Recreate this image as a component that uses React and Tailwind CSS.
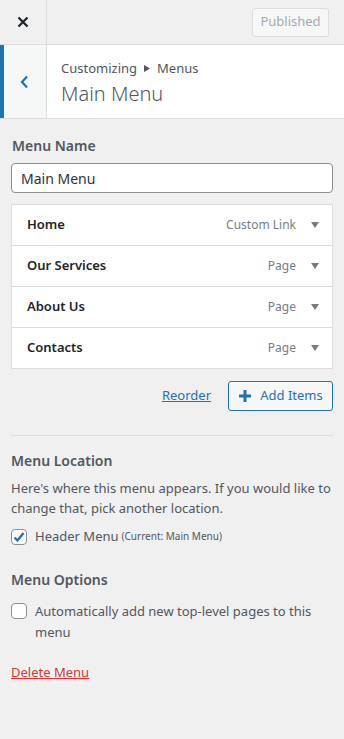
import React from 'react';

const font = { fontFamily: '"Noto Sans", "Open Sans", sans-serif' };

const items = [
    { title: 'Home', type: 'Custom Link' },
    { title: 'Our Services', type: 'Page' },
    { title: 'About Us', type: 'Page' },
    { title: 'Contacts', type: 'Page' },
];

const MenuItem = ({ title, type }) => (
    <div className="flex items-center h-[41px] pl-[15px] pr-[12px] border-t border-[#dcdcde] first:border-t-0 first:h-[40px]">
        <span className="flex-1 text-[13px] font-semibold text-[#1d2327]">{title}</span>
        <span className="text-[12px] text-[#787c82]">{type}</span>
        <svg width="10" height="8" viewBox="0 0 10 8" className="ml-[14px]">
            <path d="M1 1h8L5 7z" fill="#787c82" />
        </svg>
    </div>
);

const App = () => {
    return (
        <div className="w-[344px] h-[739px] bg-[#f0f0f1] text-[#50575e]" style={font}>
            {/* top bar */}
            <div className="flex h-[45px] border-b border-[#dcdcde]">
                <div className="w-[47px] flex items-center justify-center border-r border-[#dcdcde]">
                    <svg width="12" height="12" viewBox="0 0 12 12">
                        <path d="M1.5 1.5l9 9M10.5 1.5l-9 9" stroke="#1d2327" strokeWidth="2.2" />
                    </svg>
                </div>
                <div className="flex-1 flex items-center justify-end pr-[15px]">
                    <div className="h-[29px] w-[77px] flex items-center justify-center rounded-[3px] border border-[#dcdcde] bg-[#f6f7f7] text-[13px] text-[#a7aaad]">
                        Published
                    </div>
                </div>
            </div>

            {/* section header */}
            <div className="flex h-[74px] bg-white border-b border-[#dcdcde]">
                <div className="w-[47px] flex items-center justify-center bg-[#f6f7f7] border-l-4 border-[#2271b1] border-r border-r-[#dcdcde]">
                    <svg width="9" height="14" viewBox="0 0 9 14" className="ml-[-2px]">
                        <path d="M7 1.5L2 7l5 5.5" stroke="#2271b1" strokeWidth="2.2" fill="none" />
                    </svg>
                </div>
                <div className="flex-1 pl-[14px] pt-[13px]">
                    <div className="text-[13px] text-[#50575e] leading-[20px] flex items-center">
                        Customizing
                        <svg width="6" height="7" viewBox="0 0 6 7" className="mx-[7px]">
                            <path d="M0 0l6 3.5L0 7z" fill="#50575e" />
                        </svg>
                        Menus
                    </div>
                    <div className="text-[20px] font-light text-[#50575e] leading-[28px] mt-[2px]">Main Menu</div>
                </div>
            </div>

            {/* body */}
            <div className="px-[11px] pt-[17px]">
                <div className="text-[14px] font-semibold leading-[20px] pl-[1px]">Menu Name</div>
                <div className="mt-[7px] h-[30px] flex items-center px-[9px] bg-white border border-[#8c8f94] rounded-[4px] text-[14px] text-[#2c3338]">
                    Main Menu
                </div>

                <div className="mt-[11px] bg-white border border-[#dcdcde]">
                    {items.map((it) => (
                        <MenuItem key={it.title} {...it} />
                    ))}
                </div>

                <div className="flex items-center justify-end gap-[17px] mt-[12px]">
                    <a className="text-[13px] text-[#2271b1] underline">Reorder</a>
                    <div className="h-[30px] w-[105px] flex items-center justify-center gap-[8px] rounded-[3px] border border-[#2271b1] bg-[#f6f7f7] text-[13px] text-[#2271b1]">
                        <svg width="14" height="14" viewBox="0 0 14 14">
                            <path d="M7 1v12M1 7h12" stroke="#2271b1" strokeWidth="3" />
                        </svg>
                        Add Items
                    </div>
                </div>

                <div className="mt-[24px] border-t border-[#dcdcde]" />

                <div className="mt-[15px] text-[14px] font-semibold leading-[20px]">Menu Location</div>
                <p className="mt-[7px] text-[13px] leading-[20px]">
                    Here's where this menu appears. If you would like to change that, pick another location.
                </p>
                <div className="mt-[9px] flex items-center">
                    <div className="w-[16px] h-[16px] rounded-[4px] border border-[#8c8f94] bg-white flex items-center justify-center">
                        <svg width="14" height="14" viewBox="0 0 14 14">
                            <path d="M2.5 7.5l3 3 6-7.5" stroke="#2271b1" strokeWidth="2.4" fill="none" />
                        </svg>
                    </div>
                    <span className="ml-[8px] text-[13px]">Header Menu</span>
                    <span className="ml-[3px] text-[10px]">(Current: Main Menu)</span>
                </div>

                <div className="mt-[23px] text-[14px] font-semibold leading-[20px]">Menu Options</div>
                <div className="mt-[11px] flex items-start">
                    <div className="shrink-0 w-[16px] h-[16px] rounded-[4px] border border-[#8c8f94] bg-white mt-[2px]" />
                    <span className="ml-[8px] text-[13px] leading-[21px]">
                        Automatically add new top-level pages to this menu
                    </span>
                </div>

                <a className="block mt-[20px] text-[13px] text-[#d63638] underline">Delete Menu</a>
            </div>
        </div>
    );
};

export default App;
